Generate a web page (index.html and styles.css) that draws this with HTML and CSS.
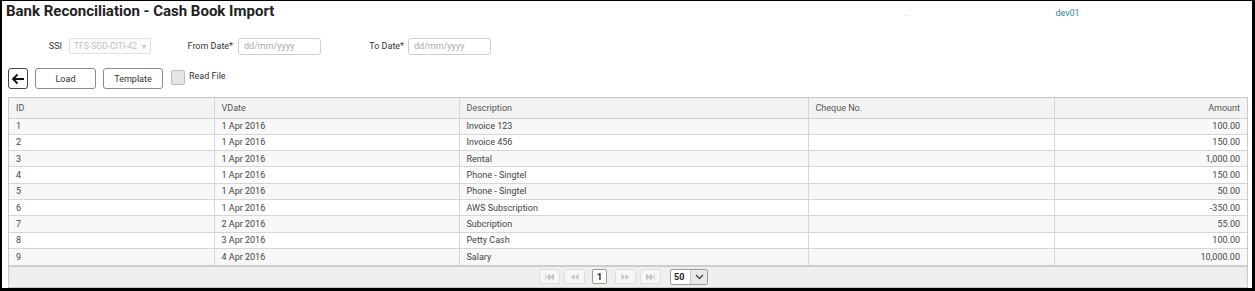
FILE: index.html
```html
<!DOCTYPE html>
<html lang="en">
<head>
  <meta charset="UTF-8">
  <title>Bank Reconciliation - Cash Book Import</title>
  <link rel="stylesheet" href="styles.css">
</head>
<body>
  <div class="page">
    <!-- Cabecera -->
    <div class="topbar">
      <h1 class="title">Bank Reconciliation - Cash Book Import</h1>
      <span class="dot">.</span>
      <span class="user">dev01</span>
    </div>

    <!-- Filtros -->
    <div class="filters">
      <label class="lbl lbl-ssi">SSI</label>
      <div class="select disabled">
        <span>TFS-SGD-CITI-42</span>
        <span class="caret">&#9662;</span>
      </div>
      <label class="lbl lbl-from">From Date*</label>
      <input class="date" type="text" placeholder="dd/mm/yyyy">
      <label class="lbl lbl-to">To Date*</label>
      <input class="date" type="text" placeholder="dd/mm/yyyy">
    </div>

    <!-- Acciones -->
    <div class="actions">
      <button class="btn btn-back" title="Back">
        <svg width="14" height="12" viewBox="0 0 14 12"><path d="M13 6H2M6.5 1.5L2 6l4.5 4.5" fill="none" stroke="#111" stroke-width="1.8"/></svg>
      </button>
      <button class="btn btn-load">Load</button>
      <button class="btn btn-template">Template</button>
      <label class="check"><span class="box"></span>Read File</label>
    </div>

    <!-- Tabla -->
    <div class="grid">
      <table>
        <colgroup>
          <col style="width:205px"><col style="width:245px"><col style="width:349px"><col style="width:246px"><col>
        </colgroup>
        <thead>
          <tr><th>ID</th><th>VDate</th><th>Description</th><th>Cheque No.</th><th class="num">Amount</th></tr>
        </thead>
        <tbody>
          <tr><td>1</td><td>1 Apr 2016</td><td>Invoice 123</td><td></td><td class="num">100.00</td></tr>
          <tr><td>2</td><td>1 Apr 2016</td><td>Invoice 456</td><td></td><td class="num">150.00</td></tr>
          <tr><td>3</td><td>1 Apr 2016</td><td>Rental</td><td></td><td class="num">1,000.00</td></tr>
          <tr><td>4</td><td>1 Apr 2016</td><td>Phone - Singtel</td><td></td><td class="num">150.00</td></tr>
          <tr><td>5</td><td>1 Apr 2016</td><td>Phone - Singtel</td><td></td><td class="num">50.00</td></tr>
          <tr><td>6</td><td>1 Apr 2016</td><td>AWS Subscription</td><td></td><td class="num">-350.00</td></tr>
          <tr><td>7</td><td>2 Apr 2016</td><td>Subcription</td><td></td><td class="num">55.00</td></tr>
          <tr><td>8</td><td>3 Apr 2016</td><td>Petty Cash</td><td></td><td class="num">100.00</td></tr>
          <tr><td>9</td><td>4 Apr 2016</td><td>Salary</td><td></td><td class="num">10,000.00</td></tr>
        </tbody>
      </table>
      <div class="pager">
        <span class="pg">
          <svg width="9" height="6" viewBox="0 0 9 6"><path d="M0.5 0v6M5 0L1.5 3L5 6zM9 0L5.5 3L9 6z" fill="#c4c4c4" stroke="#c4c4c4" stroke-width="0.6"/></svg>
        </span>
        <span class="pg">
          <svg width="9" height="6" viewBox="0 0 9 6"><path d="M4.5 0L1 3L4.5 6zM8.5 0L5 3L8.5 6z" fill="#c4c4c4"/></svg>
        </span>
        <span class="pg current">1</span>
        <span class="pg">
          <svg width="9" height="6" viewBox="0 0 9 6"><path d="M0.5 0L4 3L0.5 6zM4.5 0L8 3L4.5 6z" fill="#c4c4c4"/></svg>
        </span>
        <span class="pg">
          <svg width="9" height="6" viewBox="0 0 9 6"><path d="M0 0L3.5 3L0 6zM4 0L7.5 3L4 6zM8.5 0v6" fill="#c4c4c4" stroke="#c4c4c4" stroke-width="0.6"/></svg>
        </span>
        <span class="size">
          <span class="size-val">50</span>
          <span class="size-btn">
            <svg width="9" height="6" viewBox="0 0 9 6"><path d="M1 1l3.5 3.5L8 1" fill="none" stroke="#444" stroke-width="1.4"/></svg>
          </span>
        </span>
      </div>
    </div>
  </div>
</body>
</html>
```

FILE: styles.css
```css
* {
  box-sizing: border-box;
}
html, body {
  margin: 0;
  background: #000;
}
body {
  font-family: Roboto, "Liberation Sans", sans-serif;
  font-size: 9px;
  color: #333;
}
.page {
  width: 1255px;
  height: 291px;
  border-style: solid;
  border-color: #000;
  border-width: 1px 3px 3px 2px;
  background: #fff;
  padding: 0 4px 0 6px;
  overflow: hidden;
}

/* cabecera */
.topbar {
  display: flex;
  align-items: flex-start;
  height: 20px;
}
.title {
  margin: 0 0 0 -2px;
  flex: 0 0 899px;
  font-size: 15px;
  line-height: 20px;
  font-weight: 700;
  color: #222;
}
.dot {
  color: #aaa;
  font-size: 9px;
  line-height: 24px;
}
.user {
  margin-left: 148px;
  color: #2a8a8c;
  font-size: 9px;
  line-height: 24px;
}

/* filtros */
.filters {
  display: flex;
  align-items: center;
  height: 16px;
  margin-top: 17px;
}
.lbl {
  text-align: right;
  color: #333;
  font-size: 9px;
  padding-right: 5px;
}
.lbl-ssi { width: 61px; padding-right: 7px; }
.lbl-from { width: 87px; }
.lbl-to { width: 87px; padding-right: 4px; }
.select {
  width: 82px;
  height: 16px;
  border: 1px solid #e2e2e2;
  border-radius: 2px;
  background: #fbfbfb;
  display: flex;
  align-items: center;
  justify-content: space-between;
  padding: 0 4px;
  color: #c2c2c2;
  font-size: 8.5px;
}
.caret {
  color: #c8c8c8;
  font-size: 8px;
}
.date {
  width: 83px;
  height: 17px;
  border: 1px solid #cfcfcf;
  border-radius: 3px;
  padding: 0 5px;
  font-family: inherit;
  font-size: 9px;
  color: #333;
}
.date::placeholder {
  color: #a8a8a8;
}

/* acciones */
.actions {
  display: flex;
  align-items: center;
  margin-top: 14px;
  height: 21px;
}
.btn {
  height: 21px;
  border: 1px solid #8a8a8a;
  border-radius: 3px;
  background: #fff;
  font-family: inherit;
  font-size: 9px;
  color: #333;
  padding: 0;
  cursor: pointer;
}
.btn-back {
  width: 20px;
  border-color: #444;
  display: flex;
  align-items: center;
  justify-content: center;
  margin-right: 7px;
}
.btn-load { width: 61px; margin-right: 7px; }
.btn-template { width: 60px; margin-right: 8px; }
.check {
  display: flex;
  align-items: flex-start;
  gap: 4px;
  font-size: 9px;
  line-height: 12px;
  color: #333;
  height: 21px;
  padding-top: 2px;
}
.box {
  width: 14px;
  height: 15px;
  border: 1px solid #bdbdbd;
  border-radius: 2px;
  background: #e6e6e6;
}

/* tabla */
.grid {
  margin-top: 8px;
  border: 1px solid #c9c9c9;
  width: 1240px;
}
table {
  width: 100%;
  border-collapse: collapse;
  table-layout: fixed;
}
th, td {
  text-align: left;
  font-weight: 400;
  font-size: 9px;
  padding: 0 7px;
  border-left: 1px solid #d6d6d6;
  border-bottom: 1px solid #d6d6d6;
  white-space: nowrap;
}
th:first-child, td:first-child {
  border-left: none;
}
th {
  height: 20px;
  background: #f3f3f3;
  color: #555;
  border-bottom-color: #cfcfcf;
}
td {
  height: 16.3px;
  color: #444;
}
tbody tr:nth-child(odd) td {
  background: #f8f8f8;
}
tbody tr:last-child td {
  border-bottom: none;
}
.num {
  text-align: right;
}

/* paginador */
.pager {
  height: 22px;
  border-top: 2px solid #cdcdcd;
  background: #efefef;
  display: flex;
  align-items: center;
  padding-left: 530px;
}
.pg {
  width: 21px;
  height: 15px;
  border: 1px solid #dedede;
  border-radius: 2px;
  background: #f6f6f6;
  display: flex;
  align-items: center;
  justify-content: center;
  margin-right: 4px;
  font-size: 9px;
}
.pg:nth-child(2) { margin-right: 7px; }
.pg.current {
  width: 15px;
  border-color: #9a9a9a;
  background: #fff;
  color: #222;
  font-weight: 700;
  margin-right: 8px;
}
.pg:nth-child(5) { margin-right: 9px; }
.size {
  display: flex;
  width: 38px;
  height: 16px;
  border: 1px solid #9a9a9a;
  border-radius: 2px;
  background: #fff;
}
.size-val {
  flex: 1;
  font-weight: 700;
  font-size: 9px;
  color: #222;
  padding-left: 3px;
  line-height: 14px;
}
.size-btn {
  width: 17px;
  border-left: 1px solid #c4c4c4;
  background: #e8e8e8;
  display: flex;
  align-items: center;
  justify-content: center;
}
```
